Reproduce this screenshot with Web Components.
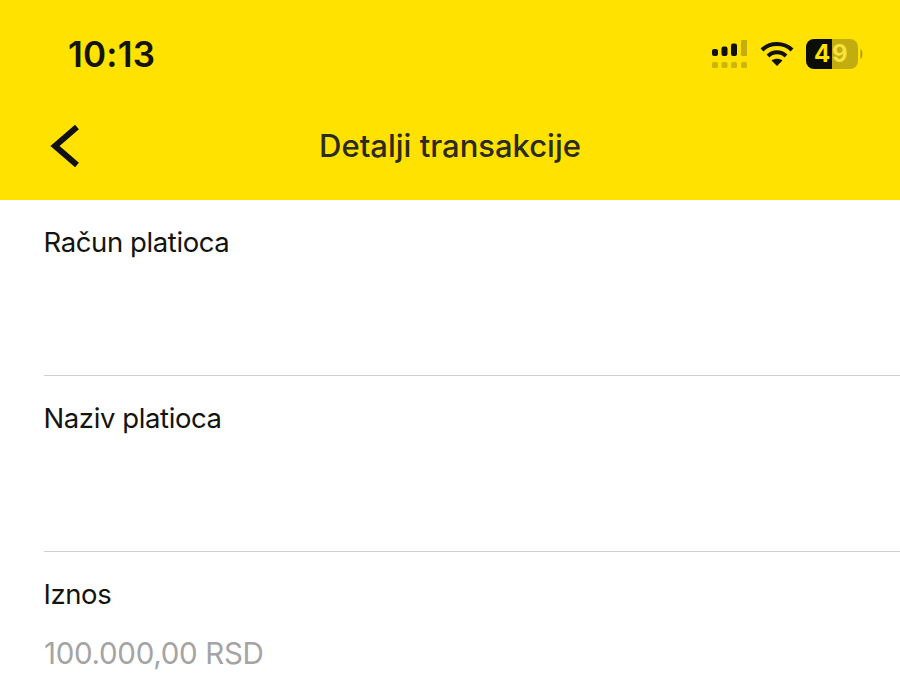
<!DOCTYPE html>
<html>
<head>
<meta charset="utf-8">
<style>
html, body { margin: 0; padding: 0; background: #fff; height: 689px; overflow: hidden; }
body { font-family: Inter, "Liberation Sans", sans-serif; }
</style>
</head>
<body>
<transaction-screen>
  <app-header slot="header" title="Detalji transakcije" time="10:13" battery="49"></app-header>
  <detail-row label="Račun platioca"></detail-row>
  <detail-row label="Naziv platioca"></detail-row>
  <detail-row label="Iznos" value="100.000,00 RSD" last></detail-row>
</transaction-screen>

<script>
class TransactionScreen extends HTMLElement {
    connectedCallback() {
        this.attachShadow({mode: 'open'});
        this.shadowRoot.innerHTML = `
      <style>
:host {
  display: flex;
  flex-direction: column;
  width: 900px;
  height: 689px;
  overflow: hidden;
  background: #fff;
}
main {
  display: flex;
  flex-direction: column;
}
      </style>
      <slot name="header"></slot>
      <main><slot></slot></main>
    `;
    }
}

class AppHeader extends HTMLElement {
    connectedCallback() {
        this.attachShadow({mode: 'open'});
        const title = this.getAttribute('title');
        const time = this.getAttribute('time');
        const battery = this.getAttribute('battery');
        this.shadowRoot.innerHTML = `
      <style>
:host {
  display: flex;
  flex-direction: column;
  height: 200px;
  background: #ffe200;
  color: #1a1a12;
  flex: none;
}
.status {
  display: flex;
  align-items: center;
  justify-content: space-between;
  height: 81px;
  padding: 27px 36px 0 68px;
  box-sizing: border-box;
}
.time {
  font-size: 35px;
  font-weight: 600;
  letter-spacing: 0.2px;
  line-height: 54px;
  color: #14140c;
}
.icons { display: flex; align-items: center; gap: 12px; }
.nav {
  display: grid;
  grid-template-columns: 1fr auto 1fr;
  align-items: center;
  height: 56px;
  margin-top: 37px;
}
.nav svg { margin-left: 50px; }
.nav h1 {
  margin: -2px 0 0;
  font-size: 31px;
  font-weight: 500;
  color: #2b2b22;
}
.battery { position: relative; width: 58px; height: 30px; }
.battery span {
  position: absolute;
  top: 0;
  font-size: 24px;
  font-weight: 700;
  line-height: 30px;
}
      </style>
      <div class="status">
        <span class="time">${time}</span>
        <div class="icons">
          <svg width="36" height="29" viewBox="0 0 36 29">
            <rect x="0" y="9" width="6" height="7" rx="2" fill="#111"/>
            <rect x="9.500" y="6.500" width="6" height="9.500" rx="2" fill="#111"/>
            <rect x="19" y="3.500" width="6" height="12.500" rx="2" fill="#111"/>
            <rect x="29" y="0" width="6" height="16" rx="1" fill="#c4ad10"/>
            <rect x="0" y="22" width="6" height="6" rx="1.500" fill="#cdb60c"/>
            <rect x="9.500" y="22" width="6" height="6" rx="1.500" fill="#cdb60c"/>
            <rect x="19" y="22" width="6" height="6" rx="1.500" fill="#cdb60c"/>
            <rect x="29" y="22" width="6" height="6" rx="1.500" fill="#cdb60c"/>
          </svg>
          <svg width="34" height="26" viewBox="0 0 34 26" fill="none" stroke="#111" stroke-width="4">
            <path d="M2 9 C10 1 24 1 32 9"/>
            <path d="M8 15 C13 10 21 10 26 15"/>
            <path d="M17 25 L11.500 19.500 C14.500 17 19.500 17 22.500 19.500 Z" fill="#111" stroke="none"/>
          </svg>
          <div class="battery">
            <svg width="58" height="30" viewBox="0 0 58 30">
              <path d="M8 0 H26 V30 H8 A8 8 0 0 1 0 22 V8 A8 8 0 0 1 8 0 Z" fill="#0c0c08"/>
              <path d="M26 0 H44 A8 8 0 0 1 52 8 V22 A8 8 0 0 1 44 30 H26 Z" fill="#c2ad10"/>
              <path d="M54.500 10 C57 11 57 19 54.500 20 Z" fill="#a8980f"/>
            </svg>
            <span style="left:8px;color:#ffe200">${battery[0]}</span>
            <span style="left:26px;color:#f6e23a">${battery[1]}</span>
          </div>
        </div>
      </div>
      <div class="nav">
        <svg width="32" height="44" viewBox="0 0 32 44" fill="none" stroke="#111" stroke-width="6">
          <path d="M27 3 L5 22 L27 41"/>
        </svg>
        <h1>${title}</h1>
        <span></span>
      </div>
    `;
    }
}

class DetailRow extends HTMLElement {
    connectedCallback() {
        this.attachShadow({mode: 'open'});
        const label = this.getAttribute('label');
        const value = this.getAttribute('value') || '';
        this.shadowRoot.innerHTML = `
      <style>
:host {
  display: block;
  height: 176px;
  margin-left: 44px;
  box-sizing: border-box;
  border-bottom: 1px solid #cfcfcf;
  padding-top: 25px;
}
:host([last]) { border-bottom: none; }
.label {
  margin-left: -0.5px;
  font-size: 27.5px;
  letter-spacing: -0.4px;
  line-height: 34px;
  color: #14140f;
}
.value {
  margin-top: 25px;
  font-size: 29.5px;
  letter-spacing: -0.3px;
  line-height: 34px;
  color: #a4a4a4;
}
      </style>
      <div class="label">${label}</div>
      <div class="value">${value}</div>
    `;
    }
}

customElements.define('transaction-screen', TransactionScreen);
customElements.define('app-header', AppHeader);
customElements.define('detail-row', DetailRow);
</script>
</body>
</html>
